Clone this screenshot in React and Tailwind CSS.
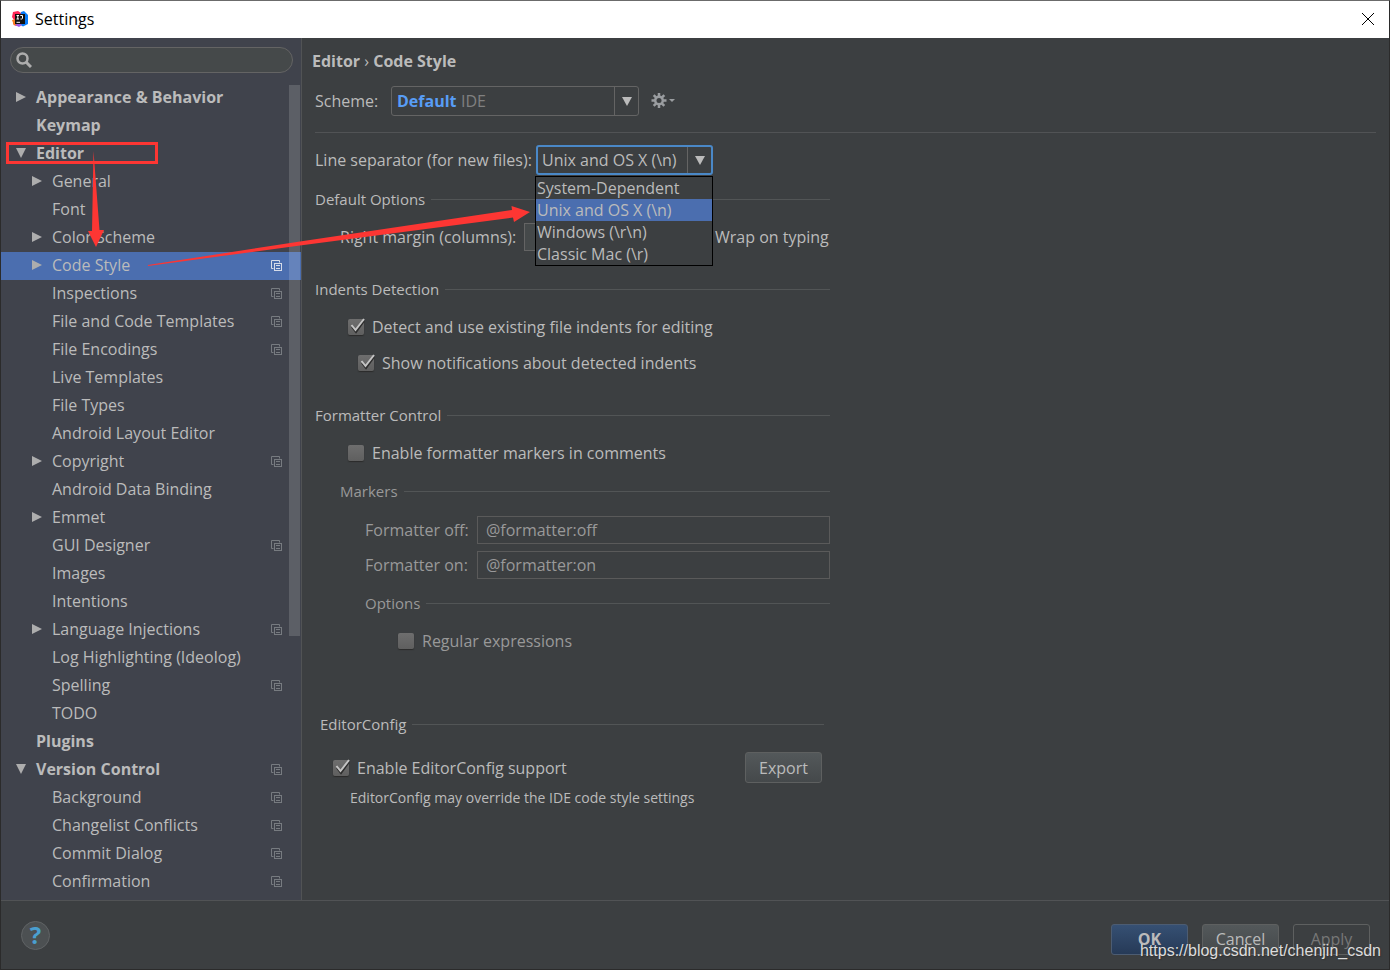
import { useState } from 'react';

const treeItems = [
  { label: 'Appearance & Behavior', level: 0, arrow: 'right' },
  { label: 'Keymap', level: 0 },
  { label: 'Editor', level: 0, arrow: 'down' },
  { label: 'General', level: 1, arrow: 'right' },
  { label: 'Font', level: 1 },
  { label: 'Color Scheme', level: 1, arrow: 'right' },
  { label: 'Code Style', level: 1, arrow: 'right', project: true },
  { label: 'Inspections', level: 1, project: true },
  { label: 'File and Code Templates', level: 1, project: true },
  { label: 'File Encodings', level: 1, project: true },
  { label: 'Live Templates', level: 1 },
  { label: 'File Types', level: 1 },
  { label: 'Android Layout Editor', level: 1 },
  { label: 'Copyright', level: 1, arrow: 'right', project: true },
  { label: 'Android Data Binding', level: 1 },
  { label: 'Emmet', level: 1, arrow: 'right' },
  { label: 'GUI Designer', level: 1, project: true },
  { label: 'Images', level: 1 },
  { label: 'Intentions', level: 1 },
  { label: 'Language Injections', level: 1, arrow: 'right', project: true },
  { label: 'Log Highlighting (Ideolog)', level: 1 },
  { label: 'Spelling', level: 1, project: true },
  { label: 'TODO', level: 1 },
  { label: 'Plugins', level: 0 },
  { label: 'Version Control', level: 0, arrow: 'down', project: true },
  { label: 'Background', level: 1, project: true },
  { label: 'Changelist Conflicts', level: 1, project: true },
  { label: 'Commit Dialog', level: 1, project: true },
  { label: 'Confirmation', level: 1, project: true },
];

const separators = [
  'System-Dependent',
  'Unix and OS X (\\n)',
  'Windows (\\r\\n)',
  'Classic Mac (\\r)',
];

function AppLogo() {
  return (
    <svg width="16" height="16" viewBox="0 0 16 16" aria-hidden="true">
      <path d="M1 1l5-1 3 2v10l-5 3-3-2 1-4-2-3z" fill="#fe2857" />
      <path d="M0 9l4-1 2 5-4 1.5z" fill="#fc801d" />
      <path d="M9 1l3-1 4 4v9l-5 2.5L7 13z" fill="#087cfa" />
      <path d="M3 14l4-2 3 2-3 2z" fill="#9d5be8" />
      <rect x="3" y="3" width="10" height="10" fill="#111" />
      <path d="M4.5 4.5h2.5M5.8 4.5v3.5M4.5 8h2.5M8.3 4.5h2.2v2.7q0 .8-1 .8h-1M4.5 11.3h3.5" stroke="#fff" fill="none" />
    </svg>
  );
}

function TreeArrow({ direction }) {
  return (
    <svg width="12" height="12" viewBox="0 0 12 12" className="shrink-0" aria-hidden="true">
      {direction === 'right' && <path d="M1 1l10 5-10 5z" fill="#adadad" />}
      {direction === 'down' && <path d="M1 1h10L6 11z" fill="#adadad" />}
    </svg>
  );
}

function ProjectIcon({ selected }) {
  return (
    <svg
      width="11"
      height="11"
      viewBox="0 0 11 11"
      fill="none"
      stroke={selected ? '#d5dbe8' : '#777b80'}
      className="shrink-0"
      aria-hidden="true"
    >
      <path d="M2.5 8.5h-2v-8h8v2" />
      <rect x="3.5" y="3.5" width="7" height="7" />
      <path d="M5 5.5h4M5 8.5h4" />
    </svg>
  );
}

function TreeRow({ item, selected, onSelect }) {
  return (
    <li>
      <button
        type="button"
        onClick={onSelect}
        className={`flex h-7 w-full items-center gap-[9px] pr-[19px] pb-0.5 text-left ${
          item.level === 0 ? 'pl-[14px] font-bold' : 'pl-[30px]'
        } ${selected ? 'bg-[#4b6eaf]' : ''}`}
      >
        <TreeArrow direction={item.arrow} />
        <span className="flex-1 whitespace-nowrap">{item.label}</span>
        {item.project && <ProjectIcon selected={selected} />}
      </button>
    </li>
  );
}

function Checkbox({ label, defaultChecked, disabled }) {
  return (
    <label className={`flex h-6 items-center gap-2 ${disabled ? 'text-[#999999]' : ''}`}>
      <span className="relative flex">
        <input
          type="checkbox"
          defaultChecked={defaultChecked}
          disabled={disabled}
          className="peer size-4 appearance-none rounded-[2px] bg-linear-to-b from-[#6e6e6e] to-[#5f5f5f] shadow-[0_1px_1px_#2b2b2b]"
        />
        <svg
          width="18"
          height="18"
          viewBox="0 0 18 18"
          fill="none"
          className="pointer-events-none absolute bottom-0 left-0 hidden peer-checked:block"
          aria-hidden="true"
        >
          <path d="M4 10l4 5 8-11" stroke="#2d2d2d" strokeWidth="2" />
          <path d="M3.5 8l4 5L16 2" stroke="#c4c4c4" strokeWidth="2" />
        </svg>
      </span>
      {label}
    </label>
  );
}

function SectionTitle({ title, disabled }) {
  return (
    <div className="flex h-6 items-center gap-1.5">
      <h3 className={`text-[15px] ${disabled ? 'text-[#999999]' : ''}`}>{title}</h3>
      <div className="h-px flex-1 bg-[#525556]" />
    </div>
  );
}

function MarkerField({ id, label, value }) {
  return (
    <div className="flex h-7 items-center text-[#999999]">
      <label htmlFor={id} className="w-28">
        {label}
      </label>
      <input
        id={id}
        defaultValue={value}
        disabled
        className="h-7 min-w-0 flex-1 border border-[#5a5a5a] px-2"
      />
    </div>
  );
}

function ComboArrow() {
  return (
    <svg width="10" height="10" viewBox="0 0 10 10" className="pointer-events-none" aria-hidden="true">
      <path d="M0 1h10L5 10z" fill="#bbbbbb" />
    </svg>
  );
}

function Sidebar() {
  const [selected, setSelected] = useState('Code Style');

  return (
    <aside className="relative w-[301px] shrink-0 border-r border-[#515355] bg-[#40434c] pb-1">
      <div className="pt-[9px] pr-2 pb-[11px] pl-[9px]">
        <label className="flex h-[26px] items-center gap-2 rounded-full border border-[#646464] bg-[#45494a] px-[5px]">
          <svg width="16" height="16" viewBox="0 0 16 16" fill="none" stroke="#adadad" aria-hidden="true">
            <circle cx="6.5" cy="6.5" r="5" strokeWidth="2.5" />
            <path d="M10 10l5 5" strokeWidth="3" />
          </svg>
          <input type="search" aria-label="Search settings" className="min-w-0 flex-1 outline-none" />
        </label>
      </div>
      <ul>
        {treeItems.map((item) => (
          <TreeRow
            key={item.label}
            item={item}
            selected={selected === item.label}
            onSelect={() => setSelected(item.label)}
          />
        ))}
      </ul>
      <div className="pointer-events-none absolute top-[47px] right-px h-[551px] w-[11px] bg-white/15" />
    </aside>
  );
}

function SchemeRow() {
  return (
    <div className="flex h-[30px] items-center">
      <label htmlFor="scheme" className="w-[76px]">
        Scheme:
      </label>
      <div className="relative flex h-[30px] w-[248px] rounded-[3px] border border-[#646464]">
        <select id="scheme" className="w-full appearance-none pl-[5px] font-bold text-[#589df6] outline-none">
          <option>Default</option>
        </select>
        <span className="pointer-events-none absolute inset-y-0 left-[69px] flex items-center text-[#808080]">
          IDE
        </span>
        <span className="pointer-events-none absolute inset-y-0 right-0 flex w-6 items-center justify-center border-l border-[#646464]">
          <ComboArrow />
        </span>
      </div>
      <button type="button" aria-label="Scheme actions" className="ml-3 flex items-center">
        <svg width="24" height="16" viewBox="0 0 24 16" aria-hidden="true">
          <g stroke="#9a9da0" strokeWidth="2.5">
            <path d="M8 0v15M.5 7.500h15M2.700 2.200l10.600 10.600M13.300 2.200L2.700 12.800" />
          </g>
          <circle cx="8" cy="7.500" r="5" fill="#9a9da0" />
          <circle cx="8" cy="7.500" r="2.500" fill="#3c3f41" />
          <path d="M18 6h6l-3 3z" fill="#9a9da0" />
        </svg>
      </button>
    </div>
  );
}

function LineSeparator() {
  const [value, setValue] = useState(separators[1]);

  return (
    <div className="flex h-[30px] items-center">
      <label htmlFor="line-separator" className="w-[221px] whitespace-nowrap">
        Line separator (for new files):
      </label>
      <div className="relative flex h-[30px] w-[177px] rounded-[3px] border-2 border-[#4a88c7]">
        <select
          id="line-separator"
          value={value}
          onChange={(e) => setValue(e.target.value)}
          className="w-full appearance-none pl-1 outline-none"
        >
          {separators.map((name) => (
            <option key={name}>{name}</option>
          ))}
        </select>
        <span className="pointer-events-none absolute inset-y-0 right-0 flex w-6 items-center justify-center border-l border-[#646464]">
          <ComboArrow />
        </span>
        <ul
          role="listbox"
          aria-label="Line separator"
          className="absolute top-[29px] -right-0.5 z-10 w-[178px] border border-black bg-[#3c3f41]"
        >
          {separators.map((name) => (
            <li
              key={name}
              role="option"
              aria-selected={name === value}
              onClick={() => setValue(name)}
              className={`h-[22px] px-px leading-[22px] whitespace-nowrap ${name === value ? 'bg-[#4b6eaf]' : ''}`}
            >
              {name}
            </li>
          ))}
        </ul>
      </div>
    </div>
  );
}

function CodeStylePanel() {
  return (
    <main className="min-w-0 flex-1 pr-[13px] pl-[13px]">
      <h2 className="-ml-[3px] mt-[11px] h-6 leading-6 font-bold">
        Editor <span className="font-normal">›</span> Code Style
      </h2>
      <div className="mt-[13px]">
        <SchemeRow />
      </div>
      <hr className="mt-4 border-[#515355]" />
      <div className="mt-3 max-w-[515px]">
        <LineSeparator />
        <div className="mt-3">
          <SectionTitle title="Default Options" />
        </div>
        <div className="mt-3 flex h-7 items-center pl-[25px]">
          <label htmlFor="right-margin" className="w-[184px] whitespace-nowrap">
            Right margin (columns):
          </label>
          <input id="right-margin" className="h-7 w-20 border border-[#646464] bg-[#45494a] px-2" />
          <div className="ml-[87px] whitespace-nowrap">
            <Checkbox label="Wrap on typing" />
          </div>
        </div>
        <div className="mt-[26px]">
          <SectionTitle title="Indents Detection" />
        </div>
        <div className="mt-[14px] pl-[33px]">
          <Checkbox label="Detect and use existing file indents for editing" defaultChecked />
        </div>
        <div className="mt-3 pl-[43px]">
          <Checkbox label="Show notifications about detected indents" defaultChecked />
        </div>
        <div className="mt-7">
          <SectionTitle title="Formatter Control" />
        </div>
        <div className="mt-[14px] pl-[33px]">
          <Checkbox label="Enable formatter markers in comments" />
        </div>
        <div className="mt-[14px] pl-[25px]">
          <SectionTitle title="Markers" disabled />
          <div className="mt-[13px] flex flex-col gap-[7px] pl-[25px]">
            <MarkerField id="formatter-off" label="Formatter off:" value="@formatter:off" />
            <MarkerField id="formatter-on" label="Formatter on:" value="@formatter:on" />
          </div>
          <div className="mt-3 pl-[25px]">
            <SectionTitle title="Options" disabled />
            <div className="mt-[14px] pl-[33px]">
              <Checkbox label="Regular expressions" disabled />
            </div>
          </div>
        </div>
        <div className="mt-[59px] pr-1.5 pl-[5px]">
          <SectionTitle title="EditorConfig" />
          <div className="mt-4 flex items-center justify-between pr-0.5 pl-[13px]">
            <Checkbox label="Enable EditorConfig support" defaultChecked />
            <button
              type="button"
              className="h-[31px] w-[77px] rounded-[3px] border border-[#5e6060] bg-linear-to-b from-[#53585a] to-[#45494b]"
            >
              Export
            </button>
          </div>
          <p className="mt-[5px] pl-[30px] text-sm leading-5">EditorConfig may override the IDE code style settings</p>
        </div>
      </div>
    </main>
  );
}

// red marks that lead from the Editor node to the opened drop-down
function Annotations() {
  return (
    <svg
      width="540"
      height="290"
      viewBox="1 1 540 290"
      className="pointer-events-none absolute top-0 left-0 z-20"
      aria-hidden="true"
    >
      <rect x="7.5" y="143.500" width="149" height="19" fill="none" stroke="#fd3633" strokeWidth="3" />
      <path d="M93.500 151L99.500 230H104L96 247L88 231H92z" fill="#fd3633" />
      <path d="M148 265L300 241.500L512 210L511.500 206L530 212L514 222L513 217.500L300 245.500L148 266z" fill="#fd3633" />
    </svg>
  );
}

export default function App() {
  return (
    <div className="relative flex min-h-screen flex-col border border-[#6b6b6b] border-x-[#2b2b2b] border-b-[#2b2b2b] bg-[#3c3f41] font-['Open_Sans',sans-serif] text-base text-[#bbbbbb]">
      <header className="flex h-[37px] items-center gap-[7px] bg-white pr-[14px] pb-px pl-[11px] text-black">
        <AppLogo />
        <h1 className="flex-1">Settings</h1>
        <button type="button" aria-label="Close">
          <svg width="14" height="14" viewBox="0 0 14 14" stroke="#000" aria-hidden="true">
            <path d="M1 1l12 12M13 1L1 13" />
          </svg>
        </button>
      </header>
      <div className="flex flex-1">
        <Sidebar />
        <CodeStylePanel />
      </div>
      <footer className="relative flex h-[69px] items-center justify-between border-t border-[#515355] pr-[19px] pl-5">
        <button
          type="button"
          aria-label="Help"
          className="size-[29px] rounded-full border border-[#606365] bg-[#4c5052] text-2xl leading-6 font-bold text-[#4a9fd0]"
        >
          ?
        </button>
        <div className="flex gap-[14px] pt-2">
          <button
            type="button"
            className="h-[31px] w-[77px] rounded-[3px] border border-[#4c5c72] bg-linear-to-b from-[#365073] to-[#263a57] font-bold"
          >
            OK
          </button>
          <button
            type="button"
            className="h-[31px] w-[77px] rounded-[3px] border border-[#5e6060] bg-linear-to-b from-[#53585a] to-[#45494b]"
          >
            Cancel
          </button>
          <button type="button" disabled className="h-[31px] w-[77px] rounded-[3px] border border-[#5e6060] text-[#777777]">
            Apply
          </button>
        </div>
        <span className="pointer-events-none absolute right-2 bottom-1.5 font-['Liberation_Sans',sans-serif] text-base text-[#dcdcdc] [text-shadow:1px_1px_1px_#333]">
          https://blog.csdn.net/chenjin_csdn
        </span>
      </footer>
      <Annotations />
    </div>
  );
}
